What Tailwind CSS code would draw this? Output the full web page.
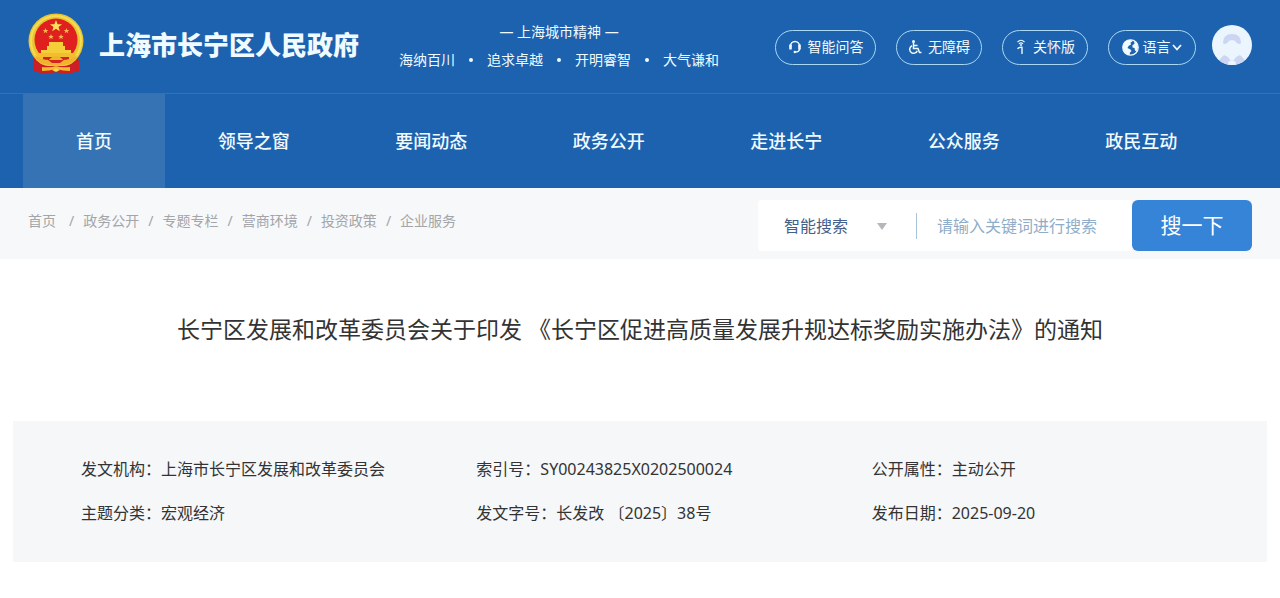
<!DOCTYPE html>
<html lang="zh-CN">
<head>
  <meta charset="UTF-8" />
  <meta name="viewport" content="width=device-width, initial-scale=1.0"/>
  <title>上海市长宁区人民政府</title>
  <script src="https://cdn.jsdelivr.net/npm/@tailwindcss/browser@4"></script>
  <style>
    body {
      font-family: 'Noto Sans', 'Noto Sans CJK SC', sans-serif;
    }
  </style>
</head>
<body class="bg-white text-[#333]">
  <header class="bg-[#1d62af] text-[#f0fbff]">
    <!-- top bar -->
    <div class="h-[94px] flex items-start justify-between px-7 border-b border-[#3073b9]">
      <div class="flex items-start">
        <svg class="w-[56px] h-[62px] mt-3" viewBox="0 0 56 62" aria-hidden="true">
          <path d="M6 44 L50 44 L51 59 L38 62 L28 60 L18 62 L5 59 Z" fill="#c81a24"/>
          <circle cx="28" cy="29" r="27.5" fill="#e9c62f"/>
          <circle cx="28" cy="29" r="25" fill="none" stroke="#f5dc58" stroke-width="2"/>
          <circle cx="28" cy="28" r="21.5" fill="#e01f1f"/>
          <path d="M28 8l1.600 4.200h4.500l-3.600 2.800 1.300 4.300-3.800-2.600-3.800 2.600 1.300-4.300-3.600-2.800h4.500z" fill="#fbe25a"/>
          <g fill="#f8b84e">
            <path id="star" d="M17.500 16l.8 1.900h2l-1.600 1.300.6 2.100-1.800-1.200-1.800 1.200.6-2.100-1.600-1.300h2z"/>
            <use href="#star" x="21"/>
            <use href="#star" x="5.500" y="6"/>
            <use href="#star" x="15.500" y="6"/>
          </g>
          <path d="M21 30h14v4h2v4h6v3H13v-3h6v-4h2z" fill="#f5cf3a"/>
          <path d="M7 41h42l-4 5H11z" fill="#f2bd2f"/>
          <path d="M15 45h26v5H15z" fill="#d3241f"/>
          <path d="M7 43q7 5 14 5 3-4 7-4t7 4q7 0 14-5-2 9-13 10-4 1-8 1t-8-1Q9 52 7 43z" fill="#f0b42c"/>
          <path d="M20 48h16l-4 3h-8z" fill="#d3241f"/>
          <path d="M5 48q9 6 17 6h12q8 0 17-6v11l-13 3-10-2-10 2-13-3z" fill="#cd1f24"/>
          <path d="M14 55q8 1 14-1 6 2 14 1v4q-7 0-14-2-7 2-14 2z" fill="#f0bc30"/>
          <path d="M24 58l4-2 4 2-4 2z" fill="#f6d548"/>
        </svg>
        <h1 class="mt-[25px] ml-[15px] text-[26px] leading-10 font-black">上海市长宁区人民政府</h1>
        <div class="mt-[18px] ml-10 text-center text-sm leading-7">
          <p>— 上海城市精神 —</p>
          <p class="flex items-center gap-[14px]">
            <span>海纳百川</span><i class="size-1 rounded-full bg-[#f0fbff]"></i>
            <span>追求卓越</span><i class="size-1 rounded-full bg-[#f0fbff]"></i>
            <span>开明睿智</span><i class="size-1 rounded-full bg-[#f0fbff]"></i>
            <span>大气谦和</span>
          </p>
        </div>
      </div>
      <div class="flex items-center mt-[25px] text-sm">
        <button class="w-[101px] h-[35px] mt-1 mr-5 flex items-center justify-center gap-1.5 border border-[#a9d8f5] rounded-full">
          <svg class="size-[14px]" viewBox="0 0 14 14" fill="none" stroke="currentColor" aria-hidden="true">
            <path d="M2.500 7V6a4.500 4.500 0 0 1 9 0v1" stroke-width="1.500"/>
            <path d="M2.500 4.500v5M11.500 4.500v5" stroke-width="2.600"/>
            <path d="M11.500 9q0 3-4.500 3" stroke-width="1.400"/>
            <circle cx="6.800" cy="12" r="1.200" fill="currentColor" stroke="none"/>
          </svg>
          智能问答
        </button>
        <button class="w-[86px] h-[35px] mt-1 mr-5 flex items-center justify-center gap-1.5 border border-[#a9d8f5] rounded-full">
          <svg class="size-[14px]" viewBox="0 0 14 14" fill="none" stroke="currentColor" stroke-width="1.500" aria-hidden="true">
            <circle cx="5.500" cy="1.500" r="1.500" fill="currentColor" stroke="none"/>
            <path d="M5.500 3v5.500h4.500l1.500 4h2M5.500 5.500h4"/>
            <path d="M4 5.800a3.900 3.900 0 1 0 5.300 4.900"/>
          </svg>
          无障碍
        </button>
        <button class="w-[86px] h-[35px] mt-1 mr-5 flex items-center justify-center gap-1.5 border border-[#a9d8f5] rounded-full">
          <svg class="w-[12px] h-[16px]" viewBox="0 0 12 16" fill="none" stroke="currentColor" aria-hidden="true">
            <path d="M2.500 3Q6-.5 9.500 3M4 4.800q2-1.800 4 0" stroke-width="1.100"/>
            <circle cx="6" cy="6" r="1" fill="currentColor" stroke="none"/>
            <path d="M2.500 9.800Q4 8 7 8.300V15" stroke-width="1.400"/>
          </svg>
          关怀版
        </button>
        <button class="w-[88px] h-[35px] mt-1 mr-4 flex items-center justify-center gap-1 border border-[#a9d8f5] rounded-full">
          <svg class="size-[17px]" viewBox="0 0 17 17" aria-hidden="true">
            <circle cx="8.500" cy="8.500" r="7.700" fill="none" stroke="currentColor" stroke-width="1.300"/>
            <path d="M1.500 5Q4 .8 9 .8l1.500 1.700-2 1 .5 2-2.500 1.500L5.500 9l3 1.500 1 1.500-1.500 1.500-.5 2.700Q3 15 1.500 11T1.500 5z" fill="currentColor"/>
            <path d="M12 2l3 2.500 1 4-1.500 4-1.500-1-.5-2.500-2-.5V6l2-1z" fill="currentColor"/>
          </svg>
          <span class="flex items-center">语言
            <svg class="w-[12px] h-[8px]" viewBox="0 0 12 8" fill="none" stroke="currentColor" stroke-width="1.800" aria-hidden="true"><path d="M2 2l4 4.500L10 2"/></svg>
          </span>
        </button>
        <a href="#" aria-label="用户中心">
          <svg class="size-10" viewBox="0 0 40 40" aria-hidden="true">
            <clipPath id="avatar"><circle cx="20" cy="20" r="20"/></clipPath>
            <g clip-path="url(#avatar)">
              <path d="M0 0h40v40H0z" fill="#ebf5fe"/>
              <path d="M11 18q0-9 9-9t9 9q-2 2-4 0-2-3-5-3t-5 3q-2 2-4 0z" fill="#ccd5f1"/>
              <path d="M8 34l4-4 4 2 2 3h4l2-3 4-2 4 4v6H8z" fill="#ccd5f1"/>
              <path d="M16 37l4-2 4 2-1 4h-6z" fill="#ebf5fe"/>
            </g>
          </svg>
        </a>
      </div>
    </div>
    <!-- main navigation -->
    <nav class="h-[94px] flex items-stretch pl-[23px] pr-[50px] text-lg font-medium">
      <a href="#" class="w-[142px] flex items-center justify-center bg-[#3573b4]">首页</a>
      <a href="#" class="flex-1 flex items-center justify-center">领导之窗</a>
      <a href="#" class="flex-1 flex items-center justify-center">要闻动态</a>
      <a href="#" class="flex-1 flex items-center justify-center">政务公开</a>
      <a href="#" class="flex-1 flex items-center justify-center">走进长宁</a>
      <a href="#" class="flex-1 flex items-center justify-center">公众服务</a>
      <a href="#" class="flex-1 flex items-center justify-center">政民互动</a>
    </nav>
  </header>

  <!-- breadcrumb and search -->
  <div class="h-[71px] flex items-start justify-between px-7 bg-[#f6f8fa]">
    <nav class="mt-[23px] flex gap-[9px] text-sm text-[#a3a5a8]">
      <a href="#" class="mr-1">首页</a><span>/</span>
      <a href="#">政务公开</a><span>/</span>
      <a href="#">专题专栏</a><span>/</span>
      <a href="#">营商环境</a><span>/</span>
      <a href="#">投资政策</a><span>/</span>
      <a href="#">企业服务</a>
    </nav>
    <form class="mt-3 flex">
      <div class="w-[374px] h-[51px] flex items-center bg-white rounded-l">
        <div class="relative w-[159px] h-[26px] border-r border-[#a9c3da]">
          <select aria-label="搜索类型" class="w-full h-full pl-[26px] appearance-none text-base leading-[26px] text-[#42608a] outline-none">
            <option>智能搜索</option>
          </select>
          <svg class="absolute right-[29px] top-[10px] w-[10px] h-[7px] pointer-events-none" viewBox="0 0 10 7" aria-hidden="true"><path d="M0 0h10L5 7z" fill="#b5b7ba"/></svg>
        </div>
        <input type="text" aria-label="关键词" placeholder="请输入关键词进行搜索" class="w-[196px] pl-5 text-base placeholder:text-[#8fadc9] outline-none"/>
      </div>
      <button type="submit" class="w-[120px] h-[51px] rounded-md bg-[#3684d7] text-[21px] text-white">搜一下</button>
    </form>
  </div>

  <main class="px-[13px]">
    <h2 class="pt-[54px] pb-[76px] text-center text-[23px] leading-8">长宁区发展和改革委员会关于印发 《长宁区促进高质量发展升规达标奖励实施办法》的通知</h2>
    <!-- document details -->
    <dl class="grid grid-cols-3 pl-[68px] pt-[26px] pb-[27px] bg-[#f5f7f9] text-base leading-[44px]">
      <div class="flex"><dt>发文机构：</dt><dd>上海市长宁区发展和改革委员会</dd></div>
      <div class="flex"><dt>索引号：</dt><dd>SY00243825X0202500024</dd></div>
      <div class="flex"><dt>公开属性：</dt><dd>主动公开</dd></div>
      <div class="flex"><dt>主题分类：</dt><dd>宏观经济</dd></div>
      <div class="flex"><dt>发文字号：</dt><dd>长发改 〔2025〕38号</dd></div>
      <div class="flex"><dt>发布日期：</dt><dd>2025-09-20</dd></div>
    </dl>
  </main>
</body>
</html>
